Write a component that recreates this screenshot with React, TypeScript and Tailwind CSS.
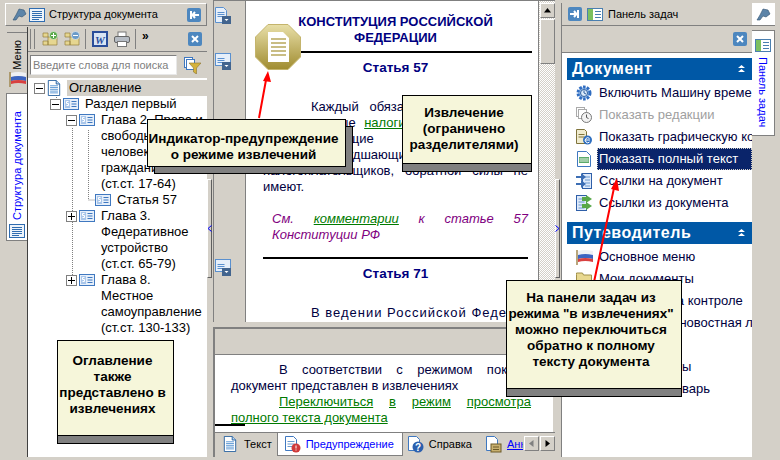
import React from 'react';

const Page = () => (
  <svg width="14" height="16" viewBox="0 0 16 18" preserveAspectRatio="none" className="shrink-0">
    <path d="M1.500.500h9l4 4v13h-13z" fill="#fff" stroke="#1c5a9c" />
    <path d="M10.500.500v4h4" fill="#bcd6f0" stroke="#1c5a9c" />
    <path d="M3.500 6.500h9M3.500 8.500h9M3.500 10.500h9M3.500 12.500h9M3.500 14.500h9" stroke="#4f8fd0" />
  </svg>
);

const Lines = () => (
  <svg width="16" height="14" viewBox="0 0 16 14" className="shrink-0">
    <rect x=".5" y=".5" width="15" height="13" fill="#eef4fb" stroke="#2f6cb0" />
    <path d="M3 3.500h10M3 5.500h10M3 7.500h10M3 9.500h10M3 11.500h7" stroke="#2f6cb0" />
  </svg>
);

const Section = () => (
  <svg width="16" height="12" viewBox="0 0 16 12" className="shrink-0">
    <rect x=".5" y=".5" width="15" height="11" fill="#e6effa" stroke="#3f78c0" />
    <rect x="2" y="2" width="5" height="8" fill="#a9c6ea" />
    <path d="M8.500 3.500h5M8.500 6h5M8.500 8.500h5" stroke="#3f78c0" />
    <path d="M5.500 3.500h-2v2h2v2h-2" fill="none" stroke="#fff" />
  </svg>
);

const SectionMenu = ({ page }: { page?: boolean }) => (
  <svg width="16" height="17" viewBox="0 0 16 17">
    {page ? (
      <path d="M.5.500h8l3 3v12H.5z" fill="#e6effa" stroke="#5a90cf" />
    ) : (
      <rect x=".5" y=".5" width="15" height="12" fill="#e6effa" stroke="#5a90cf" />
    )}
    <path d="M2.500 5.500h7M2.500 7.500h7M2.500 9.500h7" stroke="#5a90cf" />
    <rect x="7" y="9" width="9" height="8" fill="#42648e" />
    <path d="M9.500 12h4l-2 2z" fill="#fff" />
  </svg>
);

const BlueBtn = ({ d }: { d: string }) => (
  <svg width="14" height="14" viewBox="0 0 14 14" className="shrink-0">
    <rect width="14" height="14" rx="2" fill="#4d87bf" />
    <path d={d} stroke="#fff" strokeWidth="2" fill="none" />
  </svg>
);

const Pin = () => (
  <svg width="15" height="13" viewBox="0 0 15 13" className="shrink-0">
    <path d="M7 1l5 1 2 4-4 3-3-1-3 4-3 0 3-5z" fill="#5c84a8" stroke="#30506e" strokeWidth=".6" />
  </svg>
);

const Flag = () => (
  <svg width="17" height="16" viewBox="0 0 17 16" className="shrink-0">
    <path d="M1 1v15" stroke="#a08850" strokeWidth="1.500" />
    <path d="M2 2q7-2 15 0v4q-8-2-15 0z" fill="#eef0f4" />
    <path d="M2 6q7-2 15 0v4q-8-2-15 0z" fill="#3c64c0" />
    <path d="M2 10q7-2 15 0v3q-8-2-15 0z" fill="#d84040" />
  </svg>
);

const Panes = () => (
  <svg width="16" height="13" viewBox="0 0 16 13" className="shrink-0">
    <rect x=".5" y=".5" width="15" height="12" fill="#fff" stroke="#4a7fb0" />
    <rect x="1" y="1" width="5" height="11" fill="#7cc060" />
    <path d="M8 3.500h6M8 6.500h6M8 9.500h6" stroke="#4a7fb0" />
  </svg>
);

const FolderNode = ({ sign }: { sign: string }) => (
  <svg width="16" height="16" viewBox="0 0 16 16">
    <path d="M1 2h5v4h-5zM1 10h5v4h-5zM6 6h9v8H6z" fill="#e6d690" stroke="#94803c" strokeWidth=".7" />
    <circle cx="11.500" cy="4.500" r="4" fill={sign === '+' ? '#58a848' : '#6a9ac8'} stroke="#fff" strokeWidth=".5" />
    <path d={sign === '+' ? 'M9 4.500h5M11.500 2v5' : 'M9 4.500h5'} stroke="#fff" />
  </svg>
);

const Word = () => (
  <svg width="16" height="16" viewBox="0 0 16 16">
    <rect width="16" height="16" fill="#2a4d9a" />
    <rect x="2" y="2" width="12" height="12" fill="#d8e4f4" />
    <text x="8" y="12.500" textAnchor="middle" fontSize="11" fontWeight="700" fontStyle="italic" fill="#2a4d9a" fontFamily="Liberation Serif, serif">W</text>
  </svg>
);

const Printer = () => (
  <svg width="16" height="16" viewBox="0 0 16 16">
    <rect x="4" y="1" width="8" height="5" fill="#fff" stroke="#777" />
    <rect x=".5" y="5.500" width="15" height="6" rx="1.500" fill="#b6bcc4" stroke="#666" />
    <rect x="3.500" y="10.500" width="9" height="5" fill="#fff" stroke="#777" />
  </svg>
);

const Filter = () => (
  <svg width="17" height="17" viewBox="0 0 17 17">
    <rect x=".5" y=".5" width="8" height="10" fill="#fff" stroke="#3f78c0" />
    <rect x="2.500" y="2.500" width="8" height="10" fill="#fff" stroke="#3f78c0" />
    <path d="M5 6h12l-4.500 5v6l-3-2v-4z" fill="#d4b23c" stroke="#8a7430" strokeWidth=".6" />
  </svg>
);

const Gear = () => (
  <svg width="16" height="16" viewBox="0 0 16 16">
    <circle cx="8" cy="8" r="6" fill="#9cc0ec" stroke="#2f6cc0" strokeWidth="3" strokeDasharray="2.500 1.300" />
    <circle cx="8" cy="8" r="3.500" fill="#dcebfb" stroke="#2f5f9e" />
    <path d="M8 5.500V8l2 1" stroke="#2f5f9e" fill="none" />
  </svg>
);

const Clock = () => (
  <svg width="16" height="16" viewBox="0 0 16 16">
    <rect x=".5" y=".5" width="8" height="9" fill="#fff" stroke="#aaa" />
    <rect x="2.500" y="2.500" width="8" height="9" fill="#fff" stroke="#aaa" />
    <circle cx="10.500" cy="10.500" r="5" fill="#f2f2f2" stroke="#777" />
    <path d="M10.500 7.500v3l2 1" stroke="#555" fill="none" />
  </svg>
);

const PageIe = () => (
  <svg width="16" height="16" viewBox="0 0 16 16">
    <path d="M.5.500h8l2 2v12H.5z" fill="#f0ecd0" stroke="#80743c" />
    <path d="M2.500 5.500h6M2.500 8h6" stroke="#80743c" />
    <circle cx="11.500" cy="11" r="4.500" fill="#2f6fc0" />
    <path d="M9 11h5M13.500 9.500a2.500 2.500 0 1 0 0 3.500" stroke="#fff" fill="none" />
  </svg>
);

const FullText = () => (
  <svg width="16" height="16" viewBox="0 0 16 16">
    <path d="M1.500.500h9l4 4v11h-13z" fill="#fff" stroke="#3f78c0" />
    <path d="M3 6h10v6H3z" fill="#5cab6a" />
    <path d="M3.500 8h9M3.500 10h9" stroke="#e8f4e8" />
  </svg>
);

const LinksTo = () => (
  <svg width="16" height="16" viewBox="0 0 16 16">
    <rect x="6.500" y=".5" width="9" height="15" fill="#dfeafa" stroke="#2f5fa8" />
    <path d="M9 4h5M9 7h5M9 10h5M9 13h5" stroke="#6a9ad0" />
    <path d="M0 3h5V0l5 4-5 4V5H0zM0 10h5V7l5 4-5 4v-3H0z" fill="#3c6eb4" />
  </svg>
);

const LinksFrom = () => (
  <svg width="16" height="16" viewBox="0 0 16 16">
    <rect x=".5" y=".5" width="10" height="15" fill="#dfeafa" stroke="#2f5fa8" />
    <path d="M2.500 4h6M2.500 7h6M2.500 10h6M2.500 13h6" stroke="#6a9ad0" />
    <path d="M6 2h4V0l6 4-6 4V6H6zM6 9h4V7l6 4-6 4v-2H6z" fill="#58a848" />
  </svg>
);

const Folder = () => (
  <svg width="16" height="14" viewBox="0 0 16 14">
    <path d="M.5 2.500V1h6l1 2h8v10.500H.5z" fill="#e8d890" stroke="#a09048" />
  </svg>
);

const Expander = ({ open }: { open?: boolean }) => (
  <span className="w-[11px] h-[11px] border border-[#808080] bg-white relative shrink-0 block">
    <span className="absolute left-[1px] right-[1px] top-[4px] h-[1px] bg-black" />
    {!open && <span className="absolute top-[1px] bottom-[1px] left-[4px] w-[1px] bg-black" />}
  </span>
);

const treeRows = [
  { pad: 'pl-[6px]', exp: 'open', icon: 'page', lines: ['Оглавление'], sel: true },
  { pad: 'pl-[22px]', exp: 'open', icon: 'sec', lines: ['Раздел первый'] },
  { pad: 'pl-[38px]', exp: 'open', icon: 'sec', lines: ['Глава 2. Права и', 'свободы', 'человека и', 'гражданина', '(ст.ст. 17-64)'] },
  { pad: 'pl-[67px]', exp: '', icon: 'sec', lines: ['Статья 57'] },
  { pad: 'pl-[38px]', exp: 'closed', icon: 'sec', lines: ['Глава 3.', 'Федеративное', 'устройство', '(ст.ст. 65-79)'] },
  { pad: 'pl-[38px]', exp: 'closed', icon: 'sec', lines: ['Глава 8.', 'Местное', 'самоуправление', '(ст.ст. 130-133)'] },
];

const Tree = () => (
  <div className="flex-1 bg-white pt-[2px] relative text-[13px] leading-[16px] text-black">
    <svg className="absolute left-0 top-0" width="100" height="230">
      <path d="M44.500 50v148M60.500 52v70h8M28.500 17v6" stroke="#808080" strokeDasharray="1 1" fill="none" />
    </svg>
    {treeRows.map(r => (
      <div key={r.lines[0]} className={`flex items-start relative ${r.pad}`}>
        {r.exp && (
          <span className="mt-[3px] mr-[2px]">
            <Expander open={r.exp === 'open'} />
          </span>
        )}
        <span className="w-[16px] h-[16px] flex items-center shrink-0">{r.icon === 'page' ? <Page /> : <Section />}</span>
        <div className={r.sel ? 'ml-[4px] pl-[2px] flex-1 bg-[#d4d0c8]' : 'ml-[6px]'}>
          {r.lines.map(l => (
            <div key={l} className="whitespace-nowrap">{l}</div>
          ))}
        </div>
      </div>
    ))}
  </div>
);

const LeftPane = () => (
  <div className="w-[207px] shrink-0 flex flex-col pl-[5px] pt-[3px] pb-[3px]">
    <div className="h-[23px] border border-t-white border-l-white border-r-[#808080] border-b-[#808080] flex items-center pl-[6px] pr-[5px] gap-[2px] text-[11px] text-black">
      <Pin />
      <Lines />
      <span className="ml-[2px] flex-1">Структура документа</span>
      <BlueBtn d="M4 3v8M12 7H6M8 4L5.500 7 8 10" />
    </div>
    <div className="flex-1 flex min-h-0 mt-[1px]">
      <div className="w-[22px] shrink-0 flex flex-col items-end pt-[5px]">
        <div className="w-[20px] h-[56px] border-t border-[#808080] flex flex-col items-center justify-end pb-[1px]">
          <span className="[writing-mode:vertical-rl] rotate-180 text-[11px] text-black mb-[1px]">Меню</span>
          <Flag />
        </div>
        <div className="w-[21px] h-[148px] mt-[5px] bg-white border border-r-0 border-[#808080] flex flex-col items-center justify-end pb-[2px] gap-[4px]">
          <span className="[writing-mode:vertical-rl] rotate-180 text-[11px] text-[#0000ff]">Структура документа</span>
          <Lines />
        </div>
      </div>
      <div className="flex-1 flex flex-col min-w-0 border-l border-[#404040]">
        <div className="h-[25px] flex items-center pl-[2px] pr-[5px] border-b border-[#808080]">
          <span className="w-[5px] h-[20px] border-x border-[#808080]" />
          <span className="ml-[7px]"><FolderNode sign="+" /></span>
          <span className="ml-[6px]"><FolderNode sign="-" /></span>
          <span className="w-[1px] h-[20px] bg-[#808080] ml-[5px]" />
          <span className="ml-[6px]"><Word /></span>
          <span className="ml-[6px]"><Printer /></span>
          <span className="w-[1px] h-[20px] bg-[#808080] ml-[5px]" />
          <span className="ml-[6px] text-[12px] font-bold leading-none self-start mt-[3px]">»</span>
          <span className="ml-auto"><BlueBtn d="M4 4l6 6M10 4l-6 6" /></span>
        </div>
        <div className="h-[26px] flex items-center pl-[2px] gap-[7px]">
          <div className="w-[147px] h-[20px] bg-white border border-t-[#808080] border-l-[#808080] border-r-[#e8e8e8] border-b-[#e8e8e8] text-[11px] leading-[18px] text-[#808080] pl-[2px] whitespace-nowrap overflow-hidden">
            Введите слова для поиска
          </div>
          <Filter />
        </div>
        <Tree />
      </div>
    </div>
  </div>
);

const Splitter = ({ chevron }: { chevron: string }) => (
  <div className="w-[6px] shrink-0 pt-[179px]">
    <div className="w-[5px] h-[99px] bg-[#d4d0c8] border border-t-white border-l-white border-r-[#606060] border-b-[#606060] flex items-center justify-center">
      <svg width="5" height="7" viewBox="0 0 5 7" className="shrink-0">
        <path d={chevron} stroke="#0000ff" fill="none" />
      </svg>
    </div>
  </div>
);

const Line = ({ children, indent }: { children: React.ReactNode; indent?: boolean }) => (
  <div className={indent ? 'pl-[48px] text-justify [text-align-last:justify]' : 'text-justify [text-align-last:justify]'}>{children}</div>
);

const Link = ({ children }: { children: React.ReactNode }) => (
  <span className="text-[#007a00] underline">{children}</span>
);

const Doc = () => (
  <div className="flex-1 min-w-0 bg-white relative overflow-hidden pl-[17px] pr-[10px] pt-[13px] text-[13px] leading-[16px] text-[#000040]">
    <div className="text-center font-bold text-[13px] text-[#000080]">
      КОНСТИТУЦИЯ РОССИЙСКОЙ<br />ФЕДЕРАЦИИ
    </div>
    <div className="h-[2px] bg-black mt-[5px] -mr-[4px]" />
    <div className="text-center font-bold text-[#000080] text-[13.500px] mt-[7px]">Статья 57</div>
    <div className="mt-[23px]">
      <Line indent>Каждый обязан платить законно</Line>
      <Line>установленные <Link>налоги</Link> и сборы. Законы,</Line>
      <Line>устанавливающие новые налоги</Line>
      <Line>или ухудшающие положение</Line>
      <Line>налогоплательщиков, обратной силы не</Line>
      <div>имеют.</div>
    </div>
    <div className="mt-[16px] pl-[9px] italic text-[#800080]">
      <Line>См. <Link>комментарии</Link> к статье 57</Line>
      <div>Конституции РФ</div>
    </div>
    <div className="h-[2px] bg-black mt-[14px]" />
    <div className="text-center font-bold text-[#000080] text-[13.500px] mt-[7px]">Статья 71</div>
    <div className="mt-[23px] pl-[48px] whitespace-nowrap tracking-[1px]">В ведении Российской Федерации находятся:</div>
  </div>
);

const ScrollBtn = ({ d, disabled }: { d: string; disabled?: boolean }) => (
  <span className="w-[15px] h-[15px] bg-[#d4d0c8] border border-t-white border-l-white border-r-[#808080] border-b-[#808080] flex items-center justify-center">
    <svg width="9" height="9" viewBox="0 0 9 9"><path d={d} fill={disabled ? '#808080' : '#000'} /></svg>
  </span>
);

const DocTab = ({ icon, label, active, color }: { icon: React.ReactNode; label: React.ReactNode; active?: boolean; color?: string }) => (
  <div className={active ? 'h-[23px] flex items-center gap-[5px] bg-white pl-[7px] pr-[8px] border border-t-0 border-[#808080] self-start' : 'h-[22px] flex items-center gap-[5px] px-[5px] self-start'}>
    <span className="w-[16px] shrink-0 flex">{icon}</span>
    <span className={color}>{label}</span>
  </div>
);

const WarnDoc = () => (
  <svg width="16" height="17" viewBox="0 0 16 17">
    <path d="M.5.500h8l3 3v11H.5z" fill="#fff" stroke="#3f78c0" />
    <path d="M2.500 5.500h7M2.500 8h7M2.500 10.500h5" stroke="#6a9ad0" />
    <circle cx="11" cy="12" r="4.500" fill="#d03a3a" />
    <path d="M11 9.500v3M11 13.500v1" stroke="#fff" />
  </svg>
);

const HelpDoc = () => (
  <svg width="16" height="17" viewBox="0 0 16 17">
    <path d="M.5.500h8l3 3v11H.5z" fill="#fff" stroke="#3f78c0" />
    <circle cx="10" cy="11" r="5.500" fill="#2b5fae" />
    <text x="10" y="14.500" textAnchor="middle" fontSize="10" fontWeight="700" fill="#fff" fontFamily="Liberation Sans, sans-serif">?</text>
  </svg>
);

const AnnDoc = () => (
  <svg width="16" height="17" viewBox="0 0 16 17">
    <path d="M.5.500h8l3 3v11H.5z" fill="#fff" stroke="#3f78c0" />
    <rect x="5" y="8" width="10" height="8" fill="#c8b070" stroke="#6c5a28" />
    <path d="M7 11h6M7 13.500h6" stroke="#6c5a28" />
  </svg>
);

const Center = () => (
  <div className="w-[342px] shrink-0 flex flex-col">
    <div className="h-[322px] shrink-0 flex border-t border-[#808080]">
      <div className="w-[33px] shrink-0 border-x border-[#808080] pl-[1px] pt-[6px]">
        <div className="flex flex-col gap-[29px] h-[252px]">
          <SectionMenu page />
          <SectionMenu />
        </div>
        <SectionMenu />
      </div>
      <Doc />
      <div className="w-[17px] shrink-0 flex flex-col items-center pt-[2px] bg-[repeating-conic-gradient(#d4d0c8_0%_25%,#ffffff_0%_50%)] bg-[length:2px_2px] border-l border-[#808080]">
        <ScrollBtn d="M4.500 2L8 6.500H1z" />
        <span className="w-[15px] h-[45px] mt-[1px] bg-[#d4d0c8] border border-t-white border-l-white border-r-[#808080] border-b-[#808080]" />
      </div>
    </div>
    <div className="h-[5px] shrink-0" />
    <div className="flex-1 flex flex-col min-h-0 border-[2px] border-b-0 border-[#808080] border-r-[#d4d0c8] mb-[3px]">
      <div className="h-[26px] shrink-0 border-b border-[#808080]" />
      <div className="flex-1 bg-white pl-[16px] pr-[22px] pt-[7px] text-[13px] leading-[16px] text-[#000040] overflow-hidden relative">
        <Line indent>В соответствии с режимом показа,</Line>
        <div>документ представлен в извлечениях</div>
        <div className="pl-[48px] flex justify-between"><Link>Переключиться</Link><Link>в</Link><Link>режим</Link><Link>просмотра</Link></div>
        <div><Link>полного текста документа</Link></div>
        <div className="absolute left-0 bottom-[6px] w-[30px] h-[2px] bg-black" />
      </div>
      <div className="h-[25px] shrink-0 border-t border-[#808080] flex items-start text-[11px] pl-[3px] -mr-[2px] relative overflow-hidden">
        <span className="w-[1px] h-[16px] bg-[#808080] mt-[3px]" />
        <DocTab icon={<Page />} label="Текст" />
        <DocTab icon={<WarnDoc />} label="Предупреждение" active color="text-[#0000ff]" />
        <DocTab icon={<HelpDoc />} label="Справка" />
        <span className="w-[1px] h-[16px] bg-[#808080] mt-[3px] ml-[2px] mr-[2px]" />
        <DocTab icon={<AnnDoc />} label={<span className="underline">Аннотация</span>} color="text-[#0000ff]" />
        <div className="absolute right-0 top-[3px] flex gap-[1px] pl-[1px] bg-[#d4d0c8]">
          <ScrollBtn d="M2 4.500L6.500 1v7z" disabled />
          <ScrollBtn d="M7 4.500L2.500 1v7z" />
        </div>
      </div>
    </div>
  </div>
);

const Band = ({ title }: { title: string }) => (
  <div className="h-[22px] bg-[#0058a6] flex items-center justify-between pl-[5px] pr-[7px] text-white font-bold text-[16px] tracking-[0.5px]">
    {title}
    <svg width="7" height="8" viewBox="0 0 7 8"><path d="M3.500 0L7 3H0zM3.500 4L7 7H0z" fill="#fff" /></svg>
  </div>
);

const Task = ({ icon, label, muted, selected }: { icon: React.ReactNode; label: string; muted?: boolean; selected?: boolean }) => (
  <div className="h-[22px] flex items-center pl-[14px] whitespace-nowrap">
    <span className="w-[16px] shrink-0 flex justify-center">{icon}</span>
    <span className={selected ? 'ml-[5px] pl-[1px] h-[22px] flex-1 flex items-center bg-[#0a246a] text-white border border-dotted border-[#d4d0c8]' : muted ? 'ml-[7px] text-[#a0a0a0]' : 'ml-[7px] text-[#000040]'}>
      {label}
    </span>
  </div>
);

const RightPane = () => (
  <div className="flex-1 min-w-0 flex pt-[3px] pb-[3px]">
    <div className="w-[191px] shrink-0 flex flex-col border-l border-[#808080]">
      <div className="h-[23px] shrink-0 border-b border-[#808080] flex items-center pl-[6px] gap-[5px] text-[11px] text-black">
        <BlueBtn d="M10 3v8M2 7h6M6 4l2.500 3L6 10" />
        <Panes />
        <span>Панель задач</span>
      </div>
      <div className="h-[27px] shrink-0 border-b border-[#808080] flex items-center justify-end pr-[5px]">
        <BlueBtn d="M4 4l6 6M10 4l-6 6" />
      </div>
      <div className="flex-1 bg-white pt-[5px] overflow-hidden text-[13px]">
        <div className="ml-[5px]">
          <Band title="Документ" />
        </div>
        <div className="mt-[2px]">
          <Task icon={<Gear />} label="Включить Машину времени" />
          <Task icon={<Clock />} label="Показать редакции" muted />
          <Task icon={<PageIe />} label="Показать графическую копию" />
          <Task icon={<FullText />} label="Показать полный текст" selected />
          <Task icon={<LinksTo />} label="Ссылки на документ" />
          <Task icon={<LinksFrom />} label="Ссылки из документа" />
        </div>
        <div className="ml-[5px] mt-[8px]">
          <Band title="Путеводитель" />
        </div>
        <div className="mt-[2px]">
          <Task icon={<Flag />} label="Основное меню" />
          <Task icon={<Folder />} label="Мои документы" />
          <Task icon={<Folder />} label="Документы на контроле" />
          <Task icon={<Folder />} label="Прайм - Моя новостная лента" />
          <Task icon={<Folder />} label="Консультации" />
          <Task icon={<Folder />} label="Законопроекты" />
          <Task icon={<Folder />} label="Толковый словарь" />
        </div>
      </div>
    </div>
    <div className="flex-1 flex flex-col items-start">
      <div className="w-[23px] h-[23px] bg-white border-b border-[#808080] flex items-center justify-center">
        <Pin />
      </div>
      <div className="w-[23px] h-[106px] mt-[4px] bg-white border border-l-0 border-[#808080] flex flex-col items-center pt-[8px] gap-[5px]">
        <Panes />
        <span className="[writing-mode:vertical-rl] text-[11px] text-[#0000ff]">Панель задач</span>
      </div>
    </div>
  </div>
);

const Note = ({ className, body, shadow, children }: { className: string; body: string; shadow?: boolean; children: React.ReactNode }) => (
  <div className={`absolute ${className}`}>
    {shadow ? (
      <>
        <div className="absolute left-[7px] top-[7px] w-full h-full bg-[#808080] border border-black" />
        <div className={`relative h-full bg-[#f6f6da] border border-black pr-[6px] whitespace-nowrap text-center font-bold text-[13.500px] leading-[16px] text-black ${body}`}>{children}</div>
      </>
    ) : (
      <div className="h-full flex flex-col bg-[#808080] border border-black">
        <div className={`flex-1 bg-[#f6f6da] border-b border-black pr-[6px] whitespace-nowrap text-center font-bold text-[13.500px] leading-[16px] text-black ${body}`}>{children}</div>
        <div className="h-[7px] shrink-0" />
      </div>
    )}
  </div>
);

export default function App() {
  return (
    <div className="relative w-[780px] h-[460px] overflow-hidden bg-[#d4d0c8] flex font-['Liberation_Sans',sans-serif]">
      <LeftPane />
      <Splitter chevron="M4.500.500l-3.500 3 3.500 3" />
      <Center />
      <Splitter chevron="M.5.500l3.500 3-3.500 3" />
      <RightPane />

      <svg className="absolute left-0 top-0" width="780" height="460">
        <path d="M259 118L266 80M594 282L614 188" stroke="#ff0000" strokeWidth="2" />
        <path d="M268 71l-5 10 8 1zM617 178l-6 11 8 2z" fill="#ff0000" />
      </svg>
      <svg className="absolute left-[255px] top-[24px]" width="46" height="46" viewBox="0 0 46 46">
        <defs>
          <linearGradient id="gold" x1="0" y1="0" x2="0" y2="1">
            <stop offset="0" stopColor="#e8dfa8" />
            <stop offset="1" stopColor="#a08c30" />
          </linearGradient>
        </defs>
        <path d="M13 .5h20L45.500 13v20L33 45.500H13L.5 33V13z" fill="url(#gold)" stroke="#c4b46c" />
        <path d="M13 8h15l6 6v24H13z" fill="#fff" />
        <path d="M16 15h15M16 19h15M16 23h15M16 27h15M16 31h15" stroke="#b8a85c" strokeWidth="1.500" />
      </svg>

      <Note className="left-[147px] top-[119px] w-[199px] h-[48px]" body="pt-[11px]" shadow>
        Индикатор-предупреждение<br />о режиме извлечений
      </Note>
      <Note className="left-[402px] top-[95px] w-[130px] h-[77px]" body="pt-[9px]">
        Извлечение<br />(ограничено<br />разделителями)
      </Note>
      <Note className="left-[57px] top-[340px] w-[117px] h-[104px]" body="pt-[12px]">
        Оглавление<br />также<br />представлено в<br />извлечениях
      </Note>
      <Note className="left-[506px] top-[280px] w-[176px] h-[117px]" body="pt-[9px]">
        На панели задач из<br />режима "в извлечениях"<br />можно переключиться<br />обратно к полному<br />тексту документа
      </Note>
    </div>
  );
}
